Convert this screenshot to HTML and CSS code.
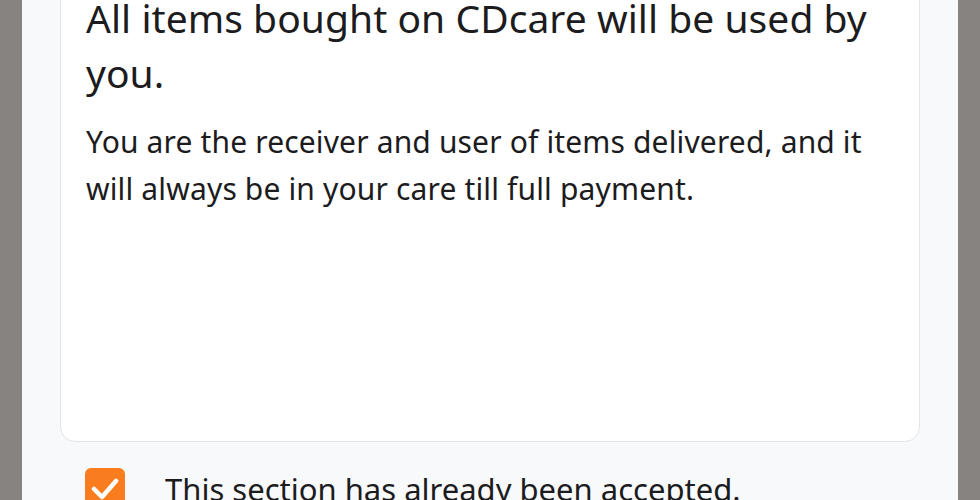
FILE: index.html
```html
<!DOCTYPE html>
<html lang="en">
<head>
<meta charset="utf-8">
<link rel="stylesheet" href="styles.css">
</head>
<body>
<div class="backdrop">
  <div class="sheet">
    <div class="card">
      <h1 class="title">All items bought on CDcare will be used by you.</h1>
      <p class="body-text">You are the receiver and user of items delivered, and it will always be in your care till full payment.</p>
    </div>
    <div class="accept-row">
      <span class="checkbox">
        <svg viewBox="0 0 40 40" width="40" height="40"><path d="M9 21 L17 29 L31 13" fill="none" stroke="#fff" stroke-width="4.5" stroke-linecap="round" stroke-linejoin="round"/></svg>
      </span>
      <span class="accept-text">This section has already been accepted.</span>
    </div>
  </div>
</div>
</body>
</html>
```
FILE: styles.css
```css
html, body {
  margin: 0;
  padding: 0;
  height: 100%;
  overflow: hidden;
}
body {
  font-family: "Noto Sans", "Open Sans", sans-serif;
  color: #1c1c1e;
}
.backdrop {
  background: #878380;
  height: 100%;
  padding: 0 22px;
  box-sizing: border-box;
}
.sheet {
  background: #f8f9fb;
  height: 100%;
  padding: 0 38px 0 38px;
  box-sizing: border-box;
  overflow: hidden;
}
.card {
  background: #ffffff;
  border: 1px solid #e3e4e6;
  border-radius: 15px;
  margin-top: -40px;
  padding: 29px 25px 0 25px;
  height: 482px;
  box-sizing: border-box;
}
.title {
  margin: 0;
  font-weight: 400;
  font-size: 39px;
  line-height: 55px;
  letter-spacing: 0.05px;
}
.body-text {
  margin: 18px 0 0 0;
  font-size: 30px;
  line-height: 47px;
  letter-spacing: 0.15px;
}
.accept-row {
  display: flex;
  align-items: flex-start;
  gap: 40px;
  margin-top: 26px;
  padding-left: 25px;
}
.checkbox {
  width: 40px;
  height: 40px;
  background: #f97d1e;
  border-radius: 6px;
  flex: none;
  display: flex;
}
.accept-text {
  font-size: 31px;
  line-height: 40px;
  margin-top: 1px;
}
```
